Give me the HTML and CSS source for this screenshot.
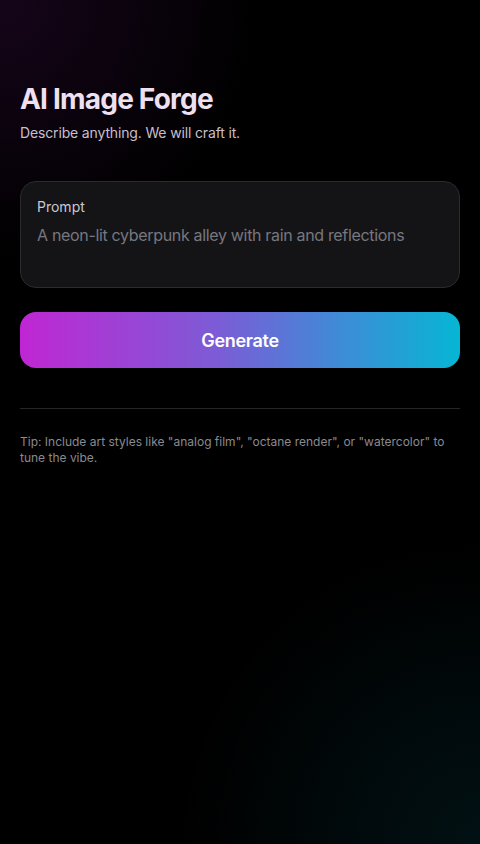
FILE: index.html
```html
<!DOCTYPE html>
<html lang="en">
<head>
<meta charset="utf-8">
<meta name="viewport" content="width=device-width, initial-scale=1">
<title>AI Image Forge</title>
<link rel="stylesheet" href="styles.css">
</head>
<body>
<main class="page">
  <header class="head">
    <h1 class="title">AI Image Forge</h1>
    <p class="subtitle">Describe anything. We will craft it.</p>
  </header>
  <label class="prompt">
    <span class="prompt-label">Prompt</span>
    <span class="prompt-placeholder">A neon-lit cyberpunk alley with rain and reflections</span>
  </label>
  <button class="generate" type="button">Generate</button>
  <hr class="divider">
  <p class="tip">Tip: Include art styles like "analog film", "octane render", or "watercolor" to tune the vibe.</p>
</main>
</body>
</html>
```
FILE: styles.css
```css
* { box-sizing: border-box; }
html, body { margin: 0; height: 100%; }
body {
  background:
    radial-gradient(circle at 0 0, rgba(168, 40, 200, 0.13) 0, rgba(168, 40, 200, 0) 260px),
    radial-gradient(circle at 100% 100%, rgba(10, 120, 140, 0.14) 0, rgba(10, 120, 140, 0) 300px),
    #000;
  font-family: Inter, "Noto Sans", sans-serif;
  color: #fff;
  min-height: 844px;
}
.page {
  padding: 83px 20px 20px;
  display: flex;
  flex-direction: column;
}
.title {
  margin: 0;
  font-size: 28px;
  line-height: 32px;
  font-weight: 700;
  letter-spacing: -0.8px;
  color: #eee0f0;
}
.subtitle {
  margin: 8px 0 0;
  font-size: 14px;
  line-height: 20px;
  letter-spacing: -0.15px;
  color: #c8bfcc;
}
.prompt {
  margin-top: 38px;
  height: 107px;
  border-radius: 16px;
  background: #141417;
  border: 1px solid #2a2a2f;
  padding: 16px 16px;
  display: flex;
  flex-direction: column;
  gap: 8px;
}
.prompt-label {
  font-size: 14px;
  line-height: 18px;
  color: #c9c9d0;
}
.prompt-placeholder {
  font-size: 16px;
  line-height: 22px;
  letter-spacing: -0.33px;
  color: #77777f;
}
.generate {
  margin-top: 24px;
  height: 56px;
  border: 0;
  border-radius: 16px;
  background: linear-gradient(90deg, #c026d3 0%, #7c5cd6 45%, #3a8fd6 75%, #06b6d4 100%);
  color: #fff;
  font-family: inherit;
  font-size: 18px;
  font-weight: 600;
  letter-spacing: -0.3px;
}
.divider {
  margin: 40px 0 0;
  border: 0;
  height: 1px;
  background: #262629;
}
.tip {
  margin: 25px 0 0;
  font-size: 12px;
  line-height: 16px;
  color: #8a8a90;
}
```
